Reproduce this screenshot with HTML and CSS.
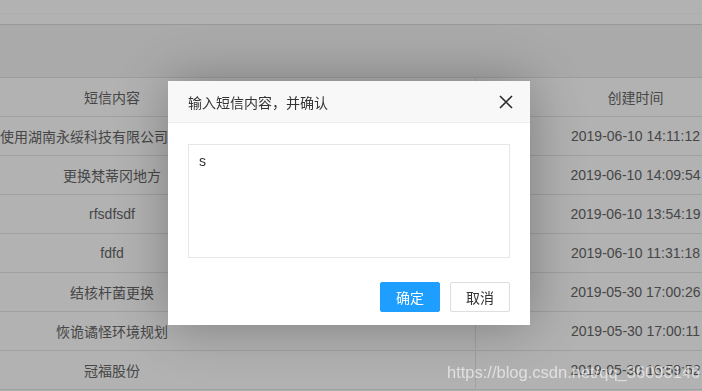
FILE: index.html
```html
<!DOCTYPE html>
<html lang="zh-CN">
<head>
  <meta charset="UTF-8" />
  <title>短信管理</title>
  <link rel="stylesheet" href="styles.css">
</head>
<body>
  <div class="page">
    <div class="top-bar"></div>
    <div class="toolbar"></div>
    <div class="table">
      <div class="row head">
        <div class="cell">短信内容</div>
        <div class="cell"></div>
        <div class="cell time">创建时间</div>
      </div>
      <div class="row">
        <div class="cell">使用湖南永绥科技有限公司短信平台</div>
        <div class="cell"></div>
        <div class="cell time">2019-06-10 14:11:12</div>
      </div>
      <div class="row">
        <div class="cell">更换梵蒂冈地方</div>
        <div class="cell"></div>
        <div class="cell time">2019-06-10 14:09:54</div>
      </div>
      <div class="row">
        <div class="cell">rfsdfsdf</div>
        <div class="cell"></div>
        <div class="cell time">2019-06-10 13:54:19</div>
      </div>
      <div class="row">
        <div class="cell">fdfd</div>
        <div class="cell"></div>
        <div class="cell time">2019-06-10 11:31:18</div>
      </div>
      <div class="row">
        <div class="cell">结核杆菌更换</div>
        <div class="cell"></div>
        <div class="cell time">2019-05-30 17:00:26</div>
      </div>
      <div class="row">
        <div class="cell">恢诡谲怪环境规划</div>
        <div class="cell"></div>
        <div class="cell time">2019-05-30 17:00:11</div>
      </div>
      <div class="row">
        <div class="cell">冠福股份</div>
        <div class="cell"></div>
        <div class="cell time">2019-05-30 16:59:52</div>
      </div>
    </div>
  </div>

  <div class="shade"></div>

  <!-- 弹出层 -->
  <div class="layer">
    <div class="layer-title">
      <span>输入短信内容，并确认</span>
      <button class="layer-close">
        <svg width="14" height="14" viewBox="0 0 14 14">
          <path d="M1 1 L13 13 M13 1 L1 13" stroke="#2b2b2b" stroke-width="1.6" fill="none"/>
        </svg>
      </button>
    </div>
    <div class="layer-content">
      <textarea class="sms-text">s</textarea>
    </div>
    <div class="layer-btn">
      <button class="btn btn-primary">确定</button>
      <button class="btn">取消</button>
    </div>
  </div>

  <div class="watermark">https://blog.csdn.net/qq_36093146</div>
</body>
</html>
```

FILE: styles.css
```css
* { box-sizing: border-box; }
body {
  margin: 0;
  font-family: "Liberation Sans", "Noto Sans CJK SC", sans-serif;
  font-size: 14px;
  color: #666;
  background: #fff;
  overflow: hidden;
}
.page {
  width: 800px;
}
.top-bar {
  margin-top: 13px;
  height: 12px;
  border-top: 1px solid #fafafa;
  border-bottom: 1px solid #dcdcdc;
}
.toolbar {
  height: 52px;
  background: #f4f4f4;
}
.table {
  border-top: 1px solid #e2e2e2;
}
.row {
  display: grid;
  grid-template-columns: 224px 251px 320px;
  height: 39px;
  padding-bottom: 1px;
  border-bottom: 1px solid #e6e6e6;
}
.cell {
  display: flex;
  align-items: center;
  justify-content: center;
  white-space: nowrap;
  overflow: hidden;
}
.cell.time {
  border-left: 1px solid #e6e6e6;
}
.shade {
  position: fixed;
  top: 0;
  left: 0;
  width: 100%;
  height: 100%;
  background: rgba(0, 0, 0, 0.3);
}
.layer {
  position: absolute;
  left: 168px;
  top: 81px;
  width: 362px;
  height: 244px;
  background: #fff;
  box-shadow: 1px 1px 50px rgba(0, 0, 0, 0.3);
}
.layer-title {
  height: 42px;
  padding: 0 17px 0 20px;
  background: #f8f8f8;
  border-bottom: 1px solid #eee;
  display: flex;
  align-items: center;
  justify-content: space-between;
  color: #333;
  font-size: 14px;
}
.layer-close {
  background: none;
  border: none;
  padding: 0;
  width: 14px;
  height: 14px;
  display: flex;
  cursor: pointer;
}
.layer-content {
  padding: 21px 20px 0;
}
.sms-text {
  display: block;
  width: 100%;
  height: 114px;
  border: 1px solid #e6e6e6;
  padding: 8px 10px;
  font-family: "Liberation Sans", "Noto Sans CJK SC", sans-serif;
  font-size: 14px;
  color: #333;
  resize: none;
  outline: none;
}
.layer-btn {
  display: flex;
  justify-content: flex-end;
  gap: 10px;
  padding: 24px 20px 12px;
}
.btn {
  height: 30px;
  padding: 0 15px;
  border: 1px solid #dedede;
  background: #fff;
  color: #333;
  font-family: "Liberation Sans", "Noto Sans CJK SC", sans-serif;
  font-size: 14px;
  border-radius: 2px;
  cursor: pointer;
  width: 60px;
}
.btn-primary {
  background: #1e9fff;
  border-color: #1e9fff;
  color: #fff;
}
.watermark {
  position: absolute;
  left: 447px;
  top: 363px;
  font-size: 16.5px;
  color: rgba(255, 255, 255, 0.6);
  white-space: nowrap;
}
```
